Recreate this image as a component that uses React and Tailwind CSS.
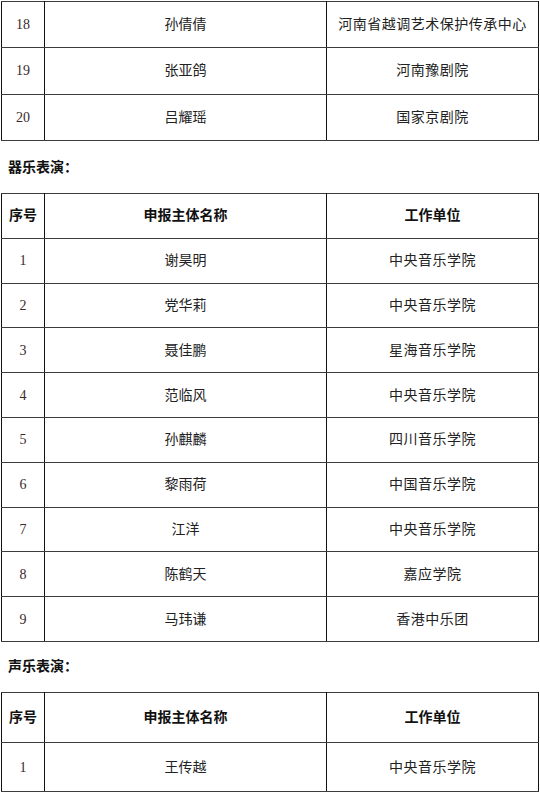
const troupe = [
  ["18", "孙倩倩", "河南省越调艺术保护传承中心"],
  ["19", "张亚鸽", "河南豫剧院"],
  ["20", "吕耀瑶", "国家京剧院"],
];

const instrumental = [
  ["1", "谢昊明", "中央音乐学院"],
  ["2", "党华莉", "中央音乐学院"],
  ["3", "聂佳鹏", "星海音乐学院"],
  ["4", "范临风", "中央音乐学院"],
  ["5", "孙麒麟", "四川音乐学院"],
  ["6", "黎雨荷", "中国音乐学院"],
  ["7", "江洋", "中央音乐学院"],
  ["8", "陈鹤天", "嘉应学院"],
  ["9", "马玮谦", "香港中乐团"],
];

const vocal = [["1", "王传越", "中央音乐学院"]];

const serif = "font-['Liberation_Serif','Noto_Sans_CJK_SC',serif]";
const sans = "font-['Liberation_Sans','Noto_Sans_CJK_SC',sans-serif]";

const cell =
  "border-x border-x-[#111] border-y-[1.5px] border-y-[#3c3c3c] text-center align-middle p-0";

function Table({ rows, header, rowH, headH }) {
  return (
    <table className="ml-[1px] w-[537px] table-fixed border-collapse text-[14px] text-[#222]">
      <colgroup>
        <col className="w-[43px]" />
        <col className="w-[282px]" />
        <col className="w-[212px]" />
      </colgroup>
      <tbody>
        {header && (
          <tr className={headH}>
            <td className={`${cell} ${sans} font-semibold text-[#111]`}>序号</td>
            <td className={`${cell} ${sans} font-semibold text-[#111]`}>申报主体名称</td>
            <td className={`${cell} ${sans} font-semibold text-[#111]`}>工作单位</td>
          </tr>
        )}
        {rows.map(([n, name, org]) => (
          <tr key={n + name} className={rowH}>
            <td className={`${cell} ${serif} text-[#3a2a2a]`}>{n}</td>
            <td className={`${cell} ${serif}`}>{name}</td>
            <td className={`${cell} ${serif} tracking-[0.5px]`}>{org}</td>
          </tr>
        ))}
      </tbody>
    </table>
  );
}

function Heading({ children, h }) {
  return (
    <div className={`${h} flex items-center pl-[8px] text-[14px] font-bold text-[#111] ${sans}`}>
      {children}
    </div>
  );
}

export default function App() {
  return (
    <div className="w-[540px] h-[793px] bg-white overflow-hidden pt-[0.5px]">
      <Table rows={troupe} rowH="h-[46.5px]" />
      <Heading h="h-[52px]">器乐表演：</Heading>
      <Table rows={instrumental} header rowH="h-[44.8px]" headH="h-[44.8px]" />
      <Heading h="h-[50px]">声乐表演：</Heading>
      <Table rows={vocal} header rowH="h-[49.5px]" headH="h-[50px]" />
    </div>
  );
}
